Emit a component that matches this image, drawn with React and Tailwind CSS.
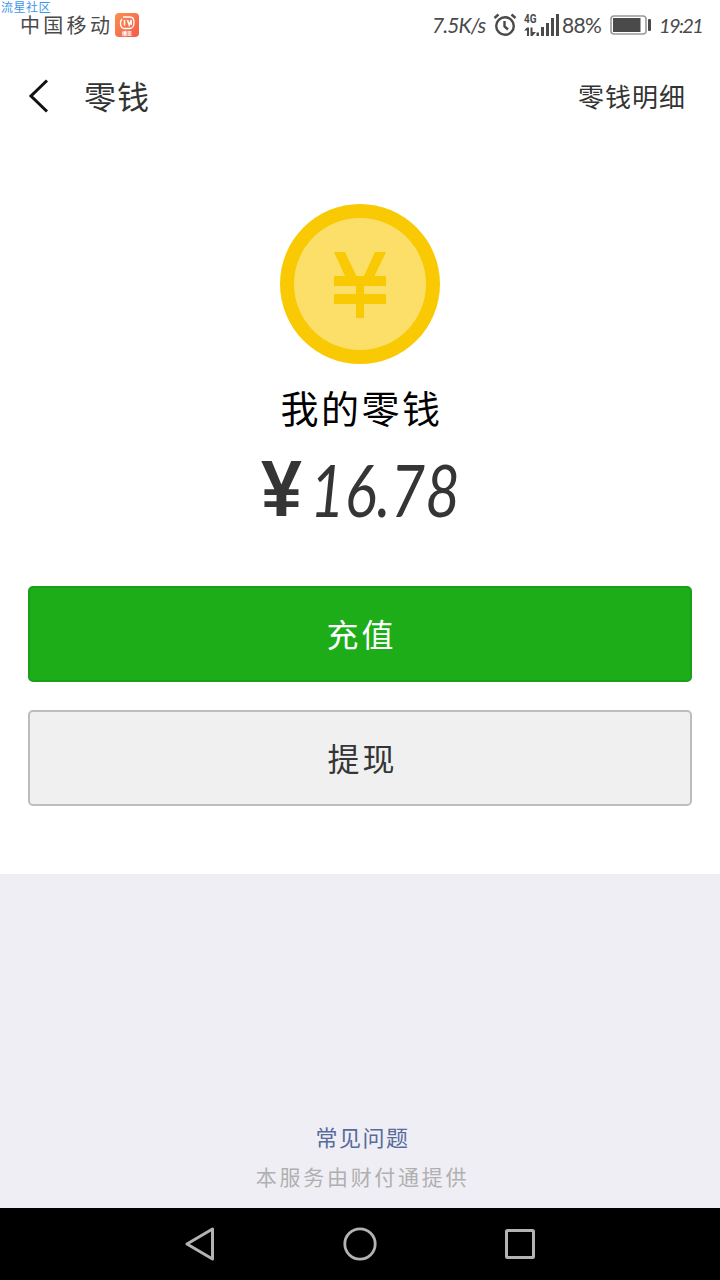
const cjk = "font-['Noto_Sans_CJK_SC','Noto_Sans',sans-serif]"
const latin = "font-['Lato','Noto_Sans_CJK_SC',sans-serif]"

function AlarmIcon() {
  return (
    <svg width="24" height="24" viewBox="0 0 24 24" fill="none" stroke="#4a4a4a" strokeWidth="2.4">
      <circle cx="12" cy="13" r="8.8" />
      <path d="M11.5 8v5.5l3.5 3" />
      <path d="M1.500 5 5.500 1.500M22.500 5 18.500 1.500" />
    </svg>
  )
}

function SignalIcon() {
  return (
    <svg className="overflow-visible" width="36" height="24" viewBox="0 0 36 24" fill="#4a4a4a">
      <text x="0" y="10" fontSize="13" fontWeight="700" fontFamily="Roboto, sans-serif" textLength="12.5" lengthAdjust="spacingAndGlyphs">4G</text>
      <path d="M3 14.500h2V23H3zM0 17.500l3-3v3H0zM6.500 14.500h2V23h-2zM8.500 19H12l-3.500 4z" />
      <path d="M12.500 19.500h2.500v3.500h-2.500zM17 14h3v9h-3zM22 10h3v13h-3zM27 5h3v18h-3zM32 1h3v22h-3z" />
    </svg>
  )
}

function BatteryIcon() {
  return (
    <svg width="42" height="20" viewBox="0 0 42 20">
      <rect x="1" y="1" width="35" height="18" rx="3" fill="none" stroke="#999" strokeWidth="1.6" />
      <rect x="3" y="3" width="27.500" height="14" fill="#4a4a4a" />
      <rect x="38" y="4" width="3" height="12" rx="1" fill="#4a4a4a" />
    </svg>
  )
}

function AppBadge() {
  return (
    <svg width="24" height="24" viewBox="0 0 24 24">
      <defs>
        <linearGradient id="badge" x1="0" y1="0" x2="1" y2="1">
          <stop offset="0" stopColor="#fb9150" />
          <stop offset="1" stopColor="#f35a4c" />
        </linearGradient>
      </defs>
      <rect width="24" height="24" rx="4" fill="url(#badge)" />
      <path d="M8 4h7c2.500 0 4 2.300 4 5.500s-1.500 6-4 6H9.500c-2.500 0-4-2-4-5 0-2 .5-3.500 1.500-4.500" fill="none" stroke="#fff" strokeWidth="1.300" />
      <path d="M9.500 7v5.500M12.500 7l1.700 5 2-5v5" fill="none" stroke="#fff" strokeWidth="1.500" />
      <text x="12" y="22" fontSize="5" fontWeight="700" fill="#fff" textAnchor="middle" fontFamily="Noto Sans CJK SC, sans-serif">播思</text>
    </svg>
  )
}

function StatusBar() {
  return (
    <header className="flex h-[50px] flex-col text-[#4a4a4a]">
      <span className="h-3 pl-px text-[12px] leading-[13px] tracking-[0.500px] text-[#3f97e8]">流星社区</span>
      <div className="flex h-[26px] items-center justify-between pl-5 pr-[17px]">
        <div className="flex items-center">
          <span className="w-[95px] whitespace-nowrap text-[20px] leading-6 tracking-[3.300px]">中国移动</span>
          <AppBadge />
        </div>
        <div className={`${latin} flex items-center whitespace-nowrap leading-6`}>
          <span className="w-[61px] text-[21px] italic tracking-[-0.900px]">7.5K/s</span>
          <AlarmIcon />
          <span className="w-[7px]" />
          <SignalIcon />
          <span className="ml-0.5 w-[48px] text-[21px] tracking-[-0.700px]">88%</span>
          <BatteryIcon />
          <span className="ml-[7px] w-[44px] text-[20px] italic tracking-[-1.600px]">19:21</span>
        </div>
      </div>
    </header>
  )
}

function Coin() {
  return (
    <svg className="mt-[60px]" width="160" height="160" viewBox="0 0 160 160">
      <circle cx="80" cy="80" r="80" fill="#f9c904" />
      <circle cx="80" cy="80" r="66" fill="#fcdf68" />
      <path d="M54 48h11l11.500 24h7.500L95 48h11L94.500 72H106v10H84v8h22v10H84v14h-8v-14H54V90h22v-8H54V72h11z" fill="#f9c904" />
    </svg>
  )
}

function Amount() {
  return (
    <div className="mt-3 flex h-[90px] w-[198px] items-center text-[#353535]">
      <span className="w-[49px] shrink-0 font-['Liberation_Sans',sans-serif] text-[80px] font-bold leading-[90px]">
        <span className="inline-block origin-left scale-x-[0.92]">¥</span>
      </span>
      <span className={`${latin} origin-left scale-x-[0.83] whitespace-nowrap text-[72px] italic leading-[90px]`}>16.78</span>
    </div>
  )
}

function NavBar() {
  return (
    <nav className="flex h-[72px] items-center justify-center gap-[128px] bg-black">
      <svg width="30" height="34" viewBox="0 0 30 34" fill="none" stroke="#b3b3b3" strokeWidth="3" strokeLinejoin="round">
        <path d="M2 17 27.500 2v30z" />
      </svg>
      <svg width="34" height="34" viewBox="0 0 34 34" fill="none" stroke="#b3b3b3" strokeWidth="2.800">
        <circle cx="17" cy="17" r="15.200" />
      </svg>
      <svg width="30" height="30" viewBox="0 0 30 30" fill="none" stroke="#b3b3b3" strokeWidth="3">
        <rect x="1.500" y="1.500" width="27" height="27" rx="1" />
      </svg>
    </nav>
  )
}

export default function App() {
  return (
    <div className={`${cjk} flex h-[1280px] w-[720px] flex-col bg-[#efeef4]`}>
      <main className="flex h-[874px] flex-col bg-white">
        <StatusBar />
        <div className="flex h-[94px] items-center pl-7 pr-[34px] text-[#333]">
          <svg className="-mt-0.5" width="22" height="36" viewBox="0 0 22 36" fill="none" stroke="#111" strokeWidth="3">
            <path d="M19 2.500 3 18l16 15.500" />
          </svg>
          <h1 className="-mt-1 ml-[34px] text-[32px] leading-10 tracking-[1px]">零钱</h1>
          <span className="-mt-0.5 ml-auto text-[26px] leading-10 tracking-[1px]">零钱明细</span>
        </div>

        <section className="flex flex-col items-center">
          <Coin />
          <p className="mt-[19px] h-[49px] pl-[3px] text-[38px] leading-[48px] tracking-[2.500px] text-black">我的零钱</p>
          <Amount />
        </section>

        <div className="mt-[52px] flex flex-col gap-7 px-7">
          <button className="h-24 rounded-[5px] border-2 border-[#1b9f19] bg-[#1cad19] pb-0.5 pl-[3px] text-[32px] tracking-[3px] text-white">充值</button>
          <button className="h-24 rounded-[5px] border-2 border-[#bdbdbd] bg-[#f0f0f0] pb-0.5 pl-[5px] text-[32px] tracking-[3px] text-[#353535]">提现</button>
        </div>
      </main>

      <footer className="mt-auto flex flex-col items-center gap-2 pb-4 pl-[5px]">
        <a className="text-[22px] leading-8 tracking-[1.500px] text-[#576b9c]">常见问题</a>
        <p className="text-[21px] leading-8 tracking-[2.700px] text-[#b0b0b0]">本服务由财付通提供</p>
      </footer>
      <NavBar />
    </div>
  )
}
